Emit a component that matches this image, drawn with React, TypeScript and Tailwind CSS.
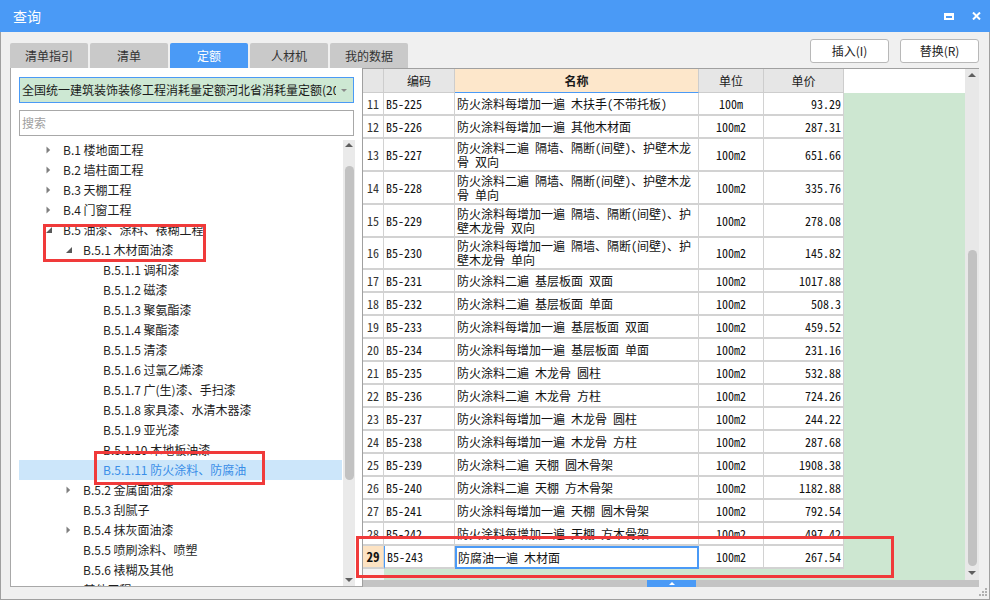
import React from "react";

type TreeNode = { label: string; level: 1 | 2 | 3; state?: "collapsed" | "expanded"; selected?: boolean };

const TREE: TreeNode[] = [
  { label: "B.1 楼地面工程", level: 1, state: "collapsed" },
  { label: "B.2 墙柱面工程", level: 1, state: "collapsed" },
  { label: "B.3 天棚工程", level: 1, state: "collapsed" },
  { label: "B.4 门窗工程", level: 1, state: "collapsed" },
  { label: "B.5 油漆、涂料、裱糊工程", level: 1, state: "expanded" },
  { label: "B.5.1 木材面油漆", level: 2, state: "expanded" },
  { label: "B.5.1.1 调和漆", level: 3 },
  { label: "B.5.1.2 磁漆", level: 3 },
  { label: "B.5.1.3 聚氨酯漆", level: 3 },
  { label: "B.5.1.4 聚酯漆", level: 3 },
  { label: "B.5.1.5 清漆", level: 3 },
  { label: "B.5.1.6 过氯乙烯漆", level: 3 },
  { label: "B.5.1.7 广(生)漆、手扫漆", level: 3 },
  { label: "B.5.1.8 家具漆、水清木器漆", level: 3 },
  { label: "B.5.1.9 亚光漆", level: 3 },
  { label: "B.5.1.10 木地板油漆", level: 3 },
  { label: "B.5.1.11 防火涂料、防腐油", level: 3, selected: true },
  { label: "B.5.2 金属面油漆", level: 2, state: "collapsed" },
  { label: "B.5.3 刮腻子", level: 2 },
  { label: "B.5.4 抹灰面油漆", level: 2, state: "collapsed" },
  { label: "B.5.5 喷刷涂料、喷塑", level: 2 },
  { label: "B.5.6 裱糊及其他", level: 2 },
  { label: "B.6 其他工程", level: 1, state: "collapsed" },
];

const PAD: Record<number, string> = { 1: "pl-[27px]", 2: "pl-[47px]", 3: "pl-[67px]" };

type Row = { n: number; code: string; name: string[]; unit: string; price: string; h: string; current?: boolean };

const ROWS: Row[] = [
  { n: 11, code: "B5-225", name: ["防火涂料每增加一遍 木扶手(不带托板)"], unit: "100m", price: "93.29", h: "h-[23px]" },
  { n: 12, code: "B5-226", name: ["防火涂料每增加一遍 其他木材面"], unit: "100m2", price: "287.31", h: "h-[23px]" },
  { n: 13, code: "B5-227", name: ["防火涂料二遍 隔墙、隔断(间壁)、护壁木龙", "骨 双向"], unit: "100m2", price: "651.66", h: "h-[33px]" },
  { n: 14, code: "B5-228", name: ["防火涂料二遍 隔墙、隔断(间壁)、护壁木龙", "骨 单向"], unit: "100m2", price: "335.76", h: "h-[33px]" },
  { n: 15, code: "B5-229", name: ["防火涂料每增加一遍 隔墙、隔断(间壁)、护", "壁木龙骨 双向"], unit: "100m2", price: "278.08", h: "h-[33px]" },
  { n: 16, code: "B5-230", name: ["防火涂料每增加一遍 隔墙、隔断(间壁)、护", "壁木龙骨 单向"], unit: "100m2", price: "145.82", h: "h-[32px]" },
  { n: 17, code: "B5-231", name: ["防火涂料二遍 基层板面 双面"], unit: "100m2", price: "1017.88", h: "h-[23px]" },
  { n: 18, code: "B5-232", name: ["防火涂料二遍 基层板面 单面"], unit: "100m2", price: "508.3", h: "h-[23px]" },
  { n: 19, code: "B5-233", name: ["防火涂料每增加一遍 基层板面 双面"], unit: "100m2", price: "459.52", h: "h-[23px]" },
  { n: 20, code: "B5-234", name: ["防火涂料每增加一遍 基层板面 单面"], unit: "100m2", price: "231.16", h: "h-[23px]" },
  { n: 21, code: "B5-235", name: ["防火涂料二遍 木龙骨 圆柱"], unit: "100m2", price: "532.88", h: "h-[23px]" },
  { n: 22, code: "B5-236", name: ["防火涂料二遍 木龙骨 方柱"], unit: "100m2", price: "724.26", h: "h-[23px]" },
  { n: 23, code: "B5-237", name: ["防火涂料每增加一遍 木龙骨 圆柱"], unit: "100m2", price: "244.22", h: "h-[23px]" },
  { n: 24, code: "B5-238", name: ["防火涂料每增加一遍 木龙骨 方柱"], unit: "100m2", price: "287.68", h: "h-[23px]" },
  { n: 25, code: "B5-239", name: ["防火涂料二遍 天棚 圆木骨架"], unit: "100m2", price: "1908.38", h: "h-[23px]" },
  { n: 26, code: "B5-240", name: ["防火涂料二遍 天棚 方木骨架"], unit: "100m2", price: "1182.88", h: "h-[23px]" },
  { n: 27, code: "B5-241", name: ["防火涂料每增加一遍 天棚 圆木骨架"], unit: "100m2", price: "792.54", h: "h-[23px]" },
  { n: 28, code: "B5-242", name: ["防火涂料每增加一遍 天棚 方木骨架"], unit: "100m2", price: "497.42", h: "h-[23px]" },
  { n: 29, code: "B5-243", name: ["防腐油一遍 木材面"], unit: "100m2", price: "267.54", h: "h-[23px]", current: true },
];

const MONO = "font-['Noto_Sans_Mono_CJK_SC','Liberation_Mono','Noto_Sans_CJK_SC',monospace]";

function Collapsed() {
  return (
    <svg width="5" height="8" viewBox="0 0 5 8">
      <polygon points="0.5,0.5 4.2,4 0.5,7.5" fill="#7f7f7f" />
    </svg>
  );
}
function Expanded() {
  return (
    <svg width="6" height="6" viewBox="0 0 6 6">
      <polygon points="6,0 6,6 0,6" fill="#595959" />
    </svg>
  );
}
function Up({ color = "#5f5f5f" }: { color?: string }) {
  return (
    <svg width="8" height="4" viewBox="0 0 8 4">
      <polygon points="0,4 4,0 8,4" fill={color} />
    </svg>
  );
}
function Down() {
  return (
    <svg width="8" height="4" viewBox="0 0 8 4">
      <polygon points="0,0 8,0 4,4" fill="#5f5f5f" />
    </svg>
  );
}

export default function App() {
  return (
    <div className="relative w-[990px] h-[600px] flex flex-col overflow-hidden bg-[#f0f0f0] font-['Noto_Sans_CJK_SC','Noto_Sans',sans-serif] text-[12px] text-[#1a1a1a]">
      {/* Title bar */}
      <div className="h-[32px] shrink-0 bg-[#4a9af6] flex items-center pl-[13px] pr-[9px]">
        <span className="text-white text-[14px] leading-none">查询</span>
        <div className="ml-auto flex items-center gap-[18px]">
          <div className="w-[10px] h-[7px] border-2 border-t-[3px] border-white" />
          <svg width="9" height="8" viewBox="0 0 9 8">
            <path d="M1 0.5L8 7.5M8 0.5L1 7.5" stroke="white" strokeWidth="2" />
          </svg>
        </div>
      </div>

      {/* Body */}
      <div className="flex-1 flex flex-col border-x border-b border-[#a0a0a0]">
        {/* Tabs + buttons */}
        <div className="h-[36px] shrink-0 flex justify-between pl-[9px] pr-[10px]">
          <div className="self-end flex gap-[2px]">
            {["清单指引", "清单", "定额", "人材机", "我的数据"].map((t) => (
              <div
                key={t}
                className={
                  t === "定额"
                    ? "w-[78px] h-[25px] flex items-center justify-center rounded-t-[2px] bg-[#4a9af6] text-white"
                    : "w-[78px] h-[25px] flex items-center justify-center rounded-t-[2px] bg-[#c9c9c9] text-[#333]"
                }
              >
                {t}
              </div>
            ))}
          </div>
          <div className="pt-[7px] flex gap-[11px]">
            {["插入(I)", "替换(R)"].map((b) => (
              <div
                key={b}
                className="w-[79px] h-[24px] bg-white border border-[#b8b8b8] rounded-[3px] flex items-center justify-center text-[#222]"
              >
                {b}
              </div>
            ))}
          </div>
        </div>

        {/* Main */}
        <div className="h-[519px] shrink-0 flex pl-[9px] pr-[10px]">
          {/* Left panel */}
          <div className="w-[352px] shrink-0 bg-white border-l border-b border-[#a8a8a8] flex flex-col pl-[8px] pt-[9px]">
            <div className="w-[335px] h-[26px] shrink-0 border border-[#4a9af6] bg-[#cde8d3] flex items-center pl-[2px] pr-[6px]">
              <div className="w-[314px] overflow-hidden whitespace-nowrap text-[#1a1a1a]">
                全国统一建筑装饰装修工程消耗量定额河北省消耗量定额(2015)
              </div>
              <div className="ml-auto">
                <svg width="6" height="3" viewBox="0 0 6 3">
                  <polygon points="0,0 6,0 3,3" fill="#8a8a8a" />
                </svg>
              </div>
            </div>
            <div className="mt-[7px] w-[335px] h-[26px] shrink-0 border border-[#a8a8a8] bg-white flex items-center pl-[2px] text-[#a0a0a0]">
              搜索
            </div>
            <div className="mt-[4px] flex-1 flex gap-[1px] overflow-hidden">
              <div className="w-[323px] overflow-hidden">
                {TREE.map((n) => (
                  <div
                    key={n.label}
                    className={
                      "h-[20px] flex items-center whitespace-nowrap " +
                      PAD[n.level] +
                      (n.selected ? " bg-[#cce6fa] text-[#3a8ee8]" : " text-[#1e1e1e]")
                    }
                  >
                    <div className="w-[17px] shrink-0 flex items-center">
                      {n.state === "collapsed" ? <Collapsed /> : n.state === "expanded" ? <Expanded /> : null}
                    </div>
                    <span>{n.label}</span>
                  </div>
                ))}
              </div>
              <div className="w-[12px] shrink-0 bg-[#eaeaea] flex flex-col items-center">
                <div className="h-[12px] shrink-0 pt-[3px]">
                  <Up />
                </div>
                <div className="h-[14px] shrink-0" />
                <div className="w-[9px] h-[314px] shrink-0 rounded-full bg-[#c2c2c2]" />
                <div className="flex-1" />
                <div className="h-[12px] shrink-0 pt-[4px]">
                  <Down />
                </div>
              </div>
            </div>
          </div>

          {/* Table */}
          <div className="flex-1 flex flex-col border-l border-t border-[#a0a0a0] bg-white">
            <div className="h-[511px] shrink-0 flex">
              <div className="flex-1 flex flex-col bg-[#cde7d1] overflow-hidden">
                {/* Header */}
                <div className="h-[24px] shrink-0 flex bg-white">
                  <div className="w-[21px] shrink-0 bg-[#e6e6e6] border-r border-b border-[#cdcdcd]" />
                  <div className="w-[71px] shrink-0 bg-[#e6e6e6] border-r border-b border-[#cdcdcd] flex items-center justify-center">编码</div>
                  <div className="w-[244px] shrink-0 bg-[#fde7cb] border-r border-[#cdcdcd] border-b border-b-[#4a9af6] flex items-center justify-center font-bold">名称</div>
                  <div className="w-[65px] shrink-0 bg-[#e6e6e6] border-r border-b border-[#cdcdcd] flex items-center justify-center">单位</div>
                  <div className="w-[80px] shrink-0 bg-[#e6e6e6] border-r border-b border-[#cdcdcd] flex items-center justify-center">单价</div>
                  <div className="flex-1" />
                </div>
                {/* Rows */}
                {ROWS.map((r) => (
                  <div key={r.n} className={"shrink-0 flex text-[12px] text-[#111] " + r.h}>
                    <div
                      className={
                        "w-[21px] shrink-0 border-r border-b-2 border-[#d2d2d2] flex items-center justify-center " +
                        MONO +
                        (r.current ? " bg-[#fde3c3] font-bold text-[13px]" : " bg-white text-[#333]")
                      }
                    >
                      {r.n}
                    </div>
                    <div
                      className={
                        "w-[71px] shrink-0 bg-white border-r border-b-2 border-[#d2d2d2] flex items-center pl-[2px] " +
                        MONO +
                        (r.current ? " border-l border-l-[#4a9af6]" : "")
                      }
                    >
                      {r.code}
                    </div>
                    <div
                      className={
                        "w-[244px] shrink-0 bg-white flex flex-col justify-center leading-[14px] whitespace-pre overflow-hidden " +
                        MONO +
                        (r.current ? " border-2 border-[#4a9af6] pl-[1px]" : " border-r border-b-2 border-[#d2d2d2] pl-[2px]")
                      }
                    >
                      {r.name.map((l) => (
                        <div key={l}>{l}</div>
                      ))}
                    </div>
                    <div className={"w-[65px] shrink-0 bg-white border-r border-b-2 border-[#d2d2d2] flex items-center justify-center " + MONO}>
                      {r.unit}
                    </div>
                    <div className={"w-[80px] shrink-0 bg-white border-r border-b-2 border-[#d2d2d2] flex items-center justify-end pr-[2px] " + MONO}>
                      {r.price}
                    </div>
                  </div>
                ))}
                <div className="flex-1 flex">
                  <div className="w-[21px] bg-[#f4f4f4]" />
                </div>
              </div>
              {/* Vertical scrollbar */}
              <div className="w-[14px] shrink-0 bg-[#e8e8e8] flex flex-col items-center">
                <div className="h-[14px] shrink-0 pt-[4px]">
                  <Up />
                </div>
                <div className="h-[167px] shrink-0" />
                <div className="w-[9px] h-[316px] shrink-0 rounded-full bg-[#c2c2c2]" />
                <div className="flex-1 flex items-center">
                  <Down />
                </div>
              </div>
            </div>
            {/* Horizontal scrollbar */}
            <div className="flex-1 flex bg-[#c4c4c4]">
              <div className="w-[284px] shrink-0" />
              <div className="w-[49px] shrink-0 bg-[#4a9af6] flex items-center justify-center">
                <svg width="6" height="3" viewBox="0 0 6 3">
                  <polygon points="0,3 3,0 6,3" fill="white" />
                </svg>
              </div>
            </div>
          </div>
        </div>

        {/* Bottom strip with grip */}
        <div className="flex-1 flex justify-end items-start pt-[1px] pr-[1px]">
          <svg width="9" height="9" viewBox="0 0 9 9">
            <rect x="6" y="0" width="2" height="2" fill="#b0b0b0" />
            <rect x="3" y="3" width="2" height="2" fill="#b0b0b0" />
            <rect x="6" y="3" width="2" height="2" fill="#b0b0b0" />
            <rect x="0" y="6" width="2" height="2" fill="#b0b0b0" />
            <rect x="3" y="6" width="2" height="2" fill="#b0b0b0" />
            <rect x="6" y="6" width="2" height="2" fill="#b0b0b0" />
          </svg>
        </div>
      </div>

      {/* Red annotation boxes */}
      <div className="absolute left-[43px] top-[224px] w-[163px] h-[38px] border-[3px] border-[#f03a3a]" />
      <div className="absolute left-[94px] top-[451px] w-[171px] h-[34px] border-[3px] border-[#f03a3a]" />
      <div className="absolute left-[356px] top-[536px] w-[538px] h-[42px] border-[3px] border-[#f03a3a]" />
    </div>
  );
}
